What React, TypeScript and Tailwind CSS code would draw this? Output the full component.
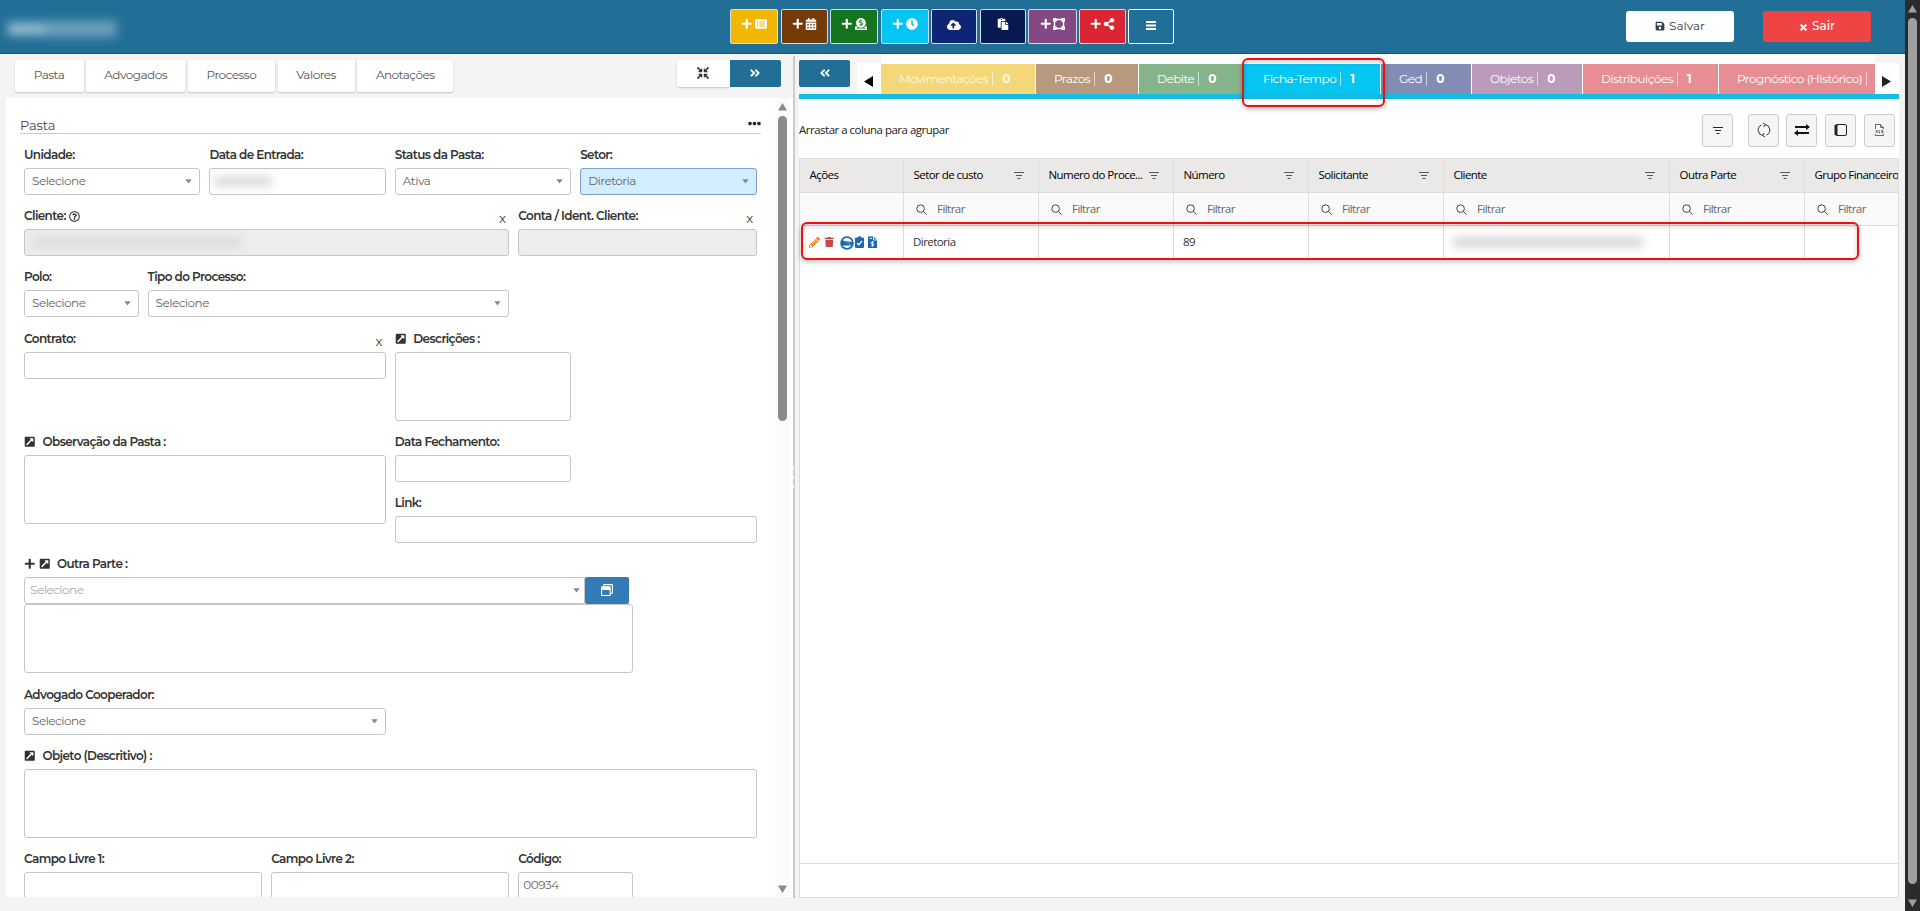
import type { ReactNode } from 'react'
import {
  FaPlus, FaCalendarAlt, FaDonate, FaClock, FaCloudUploadAlt, FaPaste, FaVectorSquare, FaShareAlt,
  FaSave, FaTimes, FaCompressArrowsAlt, FaAngleDoubleRight, FaAngleDoubleLeft, FaEllipsisH,
  FaExternalLinkSquareAlt, FaRegQuestionCircle, FaRegWindowRestore, FaPencilAlt, FaTrash,
} from 'react-icons/fa'
import { FaRectangleList } from 'react-icons/fa6'

const actions = [
  { color: 'bg-[#f2b705]', width: 'w-[48px] mr-[3px]', plus: true, icon: <FaRectangleList /> },
  { color: 'bg-[#743a08]', width: 'w-[47px] mr-[2px]', plus: true, icon: <FaCalendarAlt /> },
  { color: 'bg-[#15751f]', width: 'w-[48px] mr-[3px]', plus: true, icon: <FaDonate /> },
  { color: 'bg-[#05c5f3]', width: 'w-[48px] mr-[2px]', plus: true, icon: <FaClock /> },
  { color: 'bg-[#102475]', width: 'w-[46px] mr-[3px]', plus: false, icon: <FaCloudUploadAlt className="text-[14px]" /> },
  { color: 'bg-[#081850]', width: 'w-[46px] mr-[2px]', plus: false, icon: <FaPaste /> },
  { color: 'bg-[#824882]', width: 'w-[49px] mr-[2px]', plus: true, icon: <FaVectorSquare /> },
  { color: 'bg-[#db2533]', width: 'w-[47px] mr-[2px]', plus: true, icon: <FaShareAlt /> },
]

const formTabs = [
  { label: 'Pasta', width: 'w-[69px]' },
  { label: 'Advogados', width: 'w-[99px]' },
  { label: 'Processo', width: 'w-[87px]' },
  { label: 'Valores', width: 'w-[77px]' },
  { label: 'Anotações', width: 'w-[96px]' },
]

const recordTabs = [
  { label: 'Movimentações', count: 0, style: 'w-[154px] pl-[18px] bg-[#f3d779] text-white/80' },
  { label: 'Prazos', count: 0, style: 'w-[102px] pl-[18px] bg-[#b79a7d] text-white' },
  { label: 'Debite', count: 0, style: 'w-[104px] pl-[18px] bg-[#86b48a] text-white' },
  { label: 'Ficha-Tempo', count: 1, style: 'w-[136px] pl-[19px] bg-[#05c5f3] text-white' },
  { label: 'Ged', count: 0, style: 'w-[90px] pl-[18px] bg-[#828db5] text-white' },
  { label: 'Objetos', count: 0, style: 'w-[110px] pl-[18px] bg-[#ba9cba] text-white' },
  { label: 'Distribuições', count: 1, style: 'w-[135px] pl-[18px] bg-[#e68e93] text-white' },
  { label: 'Prognóstico (Histórico)', count: 0, style: 'w-[170px] pl-[18px] bg-[#e68e93] text-white' },
]

const columns = [
  { title: 'Ações', width: 'w-[104px]', value: 'actions' },
  { title: 'Setor de custo', width: 'w-[135px]', value: 'Diretoria' },
  { title: 'Numero do Proce...', width: 'w-[135px]', value: '' },
  { title: 'Número', width: 'w-[135px]', value: '89' },
  { title: 'Solicitante', width: 'w-[135px]', value: '' },
  { title: 'Cliente', width: 'w-[226px]', value: 'hidden' },
  { title: 'Outra Parte', width: 'w-[135px]', value: '' },
  { title: 'Grupo Financeiro', width: 'w-[94px]', value: '' },
]

function Caret() {
  return (
    <svg width="7" height="5" viewBox="0 0 7 5" className="shrink-0">
      <path d="M0.3 0.3h6.4L3.5 4.4z" fill="#888" />
    </svg>
  )
}

function FilterIcon({ color = '#555' }: { color?: string }) {
  return (
    <svg width="10" height="9" viewBox="0 0 10 9" fill="none" stroke={color} className="shrink-0">
      <path d="M0 1.5h10M2 4.5h6M3.5 7.5h3" />
    </svg>
  )
}

function SearchIcon() {
  return (
    <svg width="11" height="11" viewBox="0 0 11 11" fill="none" stroke="#444" className="shrink-0">
      <circle cx="4.6" cy="4.6" r="3.8" />
      <path d="M7.4 7.4l3.2 3.2" />
    </svg>
  )
}

interface FieldProps {
  label: string
  span: string
  prefix?: ReactNode
  help?: boolean
  clear?: boolean
  children: ReactNode
}

function Field({ label, span, prefix, help, clear, children }: FieldProps) {
  return (
    <div className={span}>
      <div className="flex h-7 items-center whitespace-nowrap pt-[2px] text-[12px] font-semibold tracking-[-0.6px] text-[#333]">
        {prefix}
        {label}
        {help && <FaRegQuestionCircle className="ml-[3px] text-[11px]" />}
        {clear && <span className="ml-auto mr-1 mt-[5px] text-[13px] font-normal">x</span>}
      </div>
      {children}
    </div>
  )
}

const box = 'rounded-[3px] border border-[#c6c6c6]'

function Input({ value, className = 'bg-white' }: { value?: string; className?: string }) {
  return <div className={`flex h-[27px] items-center px-1 pb-[1px] text-[12px] tracking-[-0.5px] text-[#666] ${box} ${className}`}>{value}</div>
}

function Select({ value, active }: { value: string; active?: boolean }) {
  return (
    <div
      className={`flex h-[27px] items-center justify-between rounded-[3px] border px-[7px] pb-[1px] text-[12px] tracking-[-0.5px] text-[#666] ${
        active ? 'border-[#7f9fce] bg-[#d1eeff]' : 'border-[#c6c6c6] bg-white'
      }`}
    >
      {value}
      <Caret />
    </div>
  )
}

function TextArea() {
  return <div className={`h-[69px] bg-white ${box}`} />
}

const expand = <FaExternalLinkSquareAlt className="mr-[7px] text-[11.5px]" />

function Header() {
  return (
    <header className="flex h-[54px] shrink-0 items-start border-b border-[#174e8d] bg-[#216f97]">
      <div className="w-[730px] pl-1 pt-[18px]">
        <div className="flex h-[21px] w-[116px] items-center bg-white/5 px-1 blur-[5px]">
          <div className="h-3 w-9 bg-white/50" />
          <div className="h-4 w-[72px] bg-white/30" />
        </div>
      </div>
      <div className="flex pt-[9px] text-[12px] text-white">
        {actions.map((a) => (
          <button key={a.color} className={`flex h-[35px] justify-center gap-[2px] rounded-[2px] border border-[#cfdde6] pt-[8px] ${a.width} ${a.color}`}>
            {a.plus && <FaPlus className="text-[11.5px]" />}
            {a.icon}
          </button>
        ))}
        <button className="flex h-[35px] w-[46px] items-center justify-center rounded-[2px] border border-white">
          <svg width="10" height="9" viewBox="0 0 10 9" className="mt-[-2px]">
            <path d="M0 1h10M0 4.500h10M0 8h10" stroke="white" strokeWidth="1.800" />
          </svg>
        </button>
      </div>
      <div className="ml-auto flex gap-[29px] pr-[34px] pt-[11px] text-[12px]">
        <button className="flex h-[31px] w-[108px] items-center justify-center gap-1 rounded-[3px] bg-white pb-[1px] text-[#33404d]">
          <FaSave className="text-[10px]" />
          Salvar
        </button>
        <button className="flex h-[31px] w-[108px] items-center justify-center gap-1 rounded-[3px] bg-[#ef4444] pb-[1px] font-medium text-white">
          <FaTimes className="mt-[2px] text-[9px]" stroke="white" strokeWidth={50} />
          Sair
        </button>
      </div>
    </header>
  )
}

function FolderForm() {
  return (
    <section className="w-[792.5px] shrink-0">
      <div className="flex h-[44px] items-start pl-[14.5px] pt-[6px]">
        <div className="flex gap-[2.7px]">
          {formTabs.map((tab) => (
            <div key={tab.label} className={`flex h-8 items-center justify-center rounded-[2px] bg-white pb-[2px] text-[12px] tracking-[-0.5px] text-[#555] shadow-[0_1px_2px_rgba(0,0,0,0.2)] ${tab.width}`}>
              {tab.label}
            </div>
          ))}
        </div>
        <div className="ml-auto mr-3 flex text-[12px]">
          <div className="flex h-[27px] w-[53px] items-center justify-center rounded-l-[2px] bg-white pb-[2px] text-[#333] shadow-[0_1px_2px_rgba(0,0,0,0.2)]">
            <FaCompressArrowsAlt />
          </div>
          <div className="flex h-[27px] w-[51px] items-center justify-center rounded-r-[2px] bg-[#216f97] pb-[1px] text-white">
            <FaAngleDoubleRight />
          </div>
        </div>
      </div>

      <div className="ml-[6px] flex h-[799px] overflow-hidden bg-white">
        <div className="w-[769px] pl-[14px] pt-[16px]">
          <div className="flex h-[20px] w-[741px] items-center justify-between border-b border-[#ccc] text-[13px] tracking-[-0.1px] text-[#444]">
            <span className="pt-[5px]">Pasta</span>
            <FaEllipsisH className="text-[#222]" />
          </div>
          <div className="ml-[4px] mt-[6px] grid w-[732.5px] grid-cols-12 gap-x-[9px] gap-y-[6px]">
            <Field label="Unidade:" span="col-span-3"><Select value="Selecione" /></Field>
            <Field label="Data de Entrada:" span="col-span-3">
              <div className={`h-[27px] pt-[7px] ${box}`}>
                <div className="ml-1 h-[11px] w-[58px] bg-[#ddd] blur-[4px]" />
              </div>
            </Field>
            <Field label="Status da Pasta:" span="col-span-3"><Select value="Ativa" /></Field>
            <Field label="Setor:" span="col-span-3"><Select value="Diretoria" active /></Field>

            <Field label="Cliente:" span="col-span-8" help clear>
              <div className={`h-[27px] overflow-hidden bg-[#ededed] pt-[8px] ${box}`}>
                <div className="ml-2 h-[9px] w-[208px] bg-[#d9d9d9] blur-[5px]" />
              </div>
            </Field>
            <Field label="Conta / Ident. Cliente:" span="col-span-4" clear><Input className="bg-[#ededed]" /></Field>

            <Field label="Polo:" span="col-span-2"><Select value="Selecione" /></Field>
            <Field label="Tipo do Processo:" span="col-span-6"><Select value="Selecione" /></Field>

            <Field label="Contrato:" span="col-span-6 col-start-1 mt-[1px]" clear><Input /></Field>
            <Field label="Descrições :" span="col-span-3 mt-[1px]" prefix={expand}><TextArea /></Field>

            <Field label="Observação da Pasta :" span="col-span-6 col-start-1" prefix={expand}><TextArea /></Field>
            <div className="col-span-6 grid grid-cols-2 gap-x-[9px] gap-y-[6px]">
              <Field label="Data Fechamento:" span="col-span-1"><Input /></Field>
              <Field label="Link:" span="col-span-2"><Input /></Field>
            </div>

            <Field
              label="Outra Parte :"
              span="col-span-10"
              prefix={<><FaPlus className="mr-[3px] text-[11.5px]" />{expand}</>}
            >
              <div className="flex">
                <div className="flex h-[27px] flex-1 items-center justify-between rounded-l-[3px] border border-[#c6c6c6] pb-[1px] pl-[5px] pr-[4px] text-[12px] tracking-[-0.5px] text-[#aaa]">
                  Selecione
                  <Caret />
                </div>
                <button className="mr-[4px] flex h-[27px] w-[44px] items-center justify-center rounded-[2px] bg-[#337ab7] pb-[1px] text-[12px] text-white">
                  <FaRegWindowRestore />
                </button>
              </div>
              <TextArea />
            </Field>

            <Field label="Advogado Cooperador:" span="col-span-6 col-start-1 mt-[1px]"><Select value="Selecione" /></Field>
            <Field label="Objeto (Descritivo) :" span="col-span-12" prefix={expand}><TextArea /></Field>
            <Field label="Campo Livre 1:" span="col-span-4"><Input /></Field>
            <Field label="Campo Livre 2:" span="col-span-4"><Input /></Field>
            <Field label="Código:" span="col-span-2"><Input value="00934" /></Field>
          </div>
        </div>
        <div className="flex w-[15px] flex-col items-center bg-[#fbfbfb] pt-[5px]">
          <svg width="9" height="8" viewBox="0 0 9 8"><path d="M4.5 0L9 7.5H0z" fill="#8a8a8a" /></svg>
          <div className="mt-[5px] h-[305px] w-[9px] rounded-full bg-[#8a8a8a]" />
          <svg width="9" height="8" viewBox="0 0 9 8" className="mb-[4px] mt-auto"><path d="M4.5 8L9 0.5H0z" fill="#8a8a8a" /></svg>
        </div>
      </div>
    </section>
  )
}

function RowActions() {
  return (
    <div className="flex items-center text-[11px]">
      <FaPencilAlt className="text-[#ea8a2d]" />
      <FaTrash className="ml-[4px] text-[10.5px] text-[#c24a4a]" />
      <svg width="14" height="14" viewBox="0 0 14 14" className="ml-[5px] mt-[1px]">
        <circle cx="7" cy="7" r="5.9" fill="none" stroke="#1b67b0" strokeWidth="1.8" />
        <path d="M2 4.500l10 1.500v3.500H2z" fill="#1b67b0" />
        <path d="M2.500 3.500L11 9.500M8 6.200h2" stroke="#8fb6dc" strokeWidth="0.600" />
      </svg>
      <svg width="9" height="12" viewBox="0 0 9 12" className="ml-[1px]">
        <path d="M1 1.5h2a1.5 1.5 0 0 1 3 0h2a1 1 0 0 1 1 1V11a1 1 0 0 1-1 1H1a1 1 0 0 1-1-1V2.500a1 1 0 0 1 1-1z" fill="#1b67b0" />
        <path d="M2 7l1.800 1.800L7 5" fill="none" stroke="white" strokeWidth="1.300" />
      </svg>
      <svg width="9" height="12" viewBox="0 0 9 12" className="ml-[4px]">
        <path d="M0 0.500h5.500L9 4v8H0z" fill="#1b67b0" />
        <path d="M5.500 0.500V4H9M1.500 2.500H4M5.800 6H4a.9.9 0 0 0 0 1.800h1a.9.9 0 0 1 0 1.800H3.200M4.500 5v5.600" fill="none" stroke="white" strokeWidth="0.900" />
      </svg>
    </div>
  )
}

function ToolButton({ className, children }: { className: string; children: ReactNode }) {
  return (
    <button className={`flex h-[33px] w-[31px] items-center justify-center rounded-[3px] border border-[#ccc] bg-[#f5f5f5] ${className}`}>
      {children}
    </button>
  )
}

function Records() {
  return (
    <section className="ml-[4.500px] flex h-[844px] w-[1100px] flex-col bg-white">
      <div className="flex h-[40px] shrink-0 bg-[#f4f4f4]">
        <button className="mt-[6px] flex h-[27px] w-[51px] items-center justify-center rounded-[2px] bg-[#216f97] pb-[1px] text-[12px] text-white">
          <FaAngleDoubleLeft />
        </button>
        <div className="ml-[7px] mt-[9px] flex w-6 items-center justify-center bg-white pr-[2px] pt-[5px]">
          <svg width="9" height="11" viewBox="0 0 9 11"><path d="M0 5.500L9 0v11z" fill="#000" /></svg>
        </div>
        <div className="flex w-[994px] gap-[1px] overflow-hidden bg-white pt-[10px]">
          {recordTabs.map((tab) => (
            <div key={tab.label} className={`flex h-[30px] shrink-0 items-center whitespace-nowrap text-[12px] tracking-[-0.5px] ${tab.style}`}>
              {tab.label}
              <span className="ml-[4px] flex h-[14px] items-center border-l border-white/60 pl-[9px] font-bold">{tab.count}</span>
            </div>
          ))}
        </div>
        <div className="mt-[9px] flex flex-1 items-center justify-center bg-white pr-[2px] pt-[5px]">
          <svg width="9" height="11" viewBox="0 0 9 11"><path d="M9 5.500L0 0v11z" fill="#222" /></svg>
        </div>
      </div>
      <div className="h-[5px] shrink-0 bg-[#16bde3]" />

      <div className="flex h-[59px] shrink-0 items-center font-['Open_Sans','Noto_Sans',sans-serif] text-[11.5px] tracking-[-0.5px] text-[#222]">
        <span className="pt-[3px]">Arrastar a coluna para agrupar</span>
        <div className="ml-auto flex pr-[4px] pt-[3px]">
          <ToolButton className="mr-[15px]"><FilterIcon color="#222" /></ToolButton>
          <ToolButton className="mr-[7px]">
            <svg width="14" height="16" viewBox="0 0 14 16" fill="none" stroke="#333">
              <path d="M8 2.500A5.500 5.500 0 0 1 9.500 13M6 13.500A5.500 5.500 0 0 1 4.500 3" />
              <path d="M6 1L8.300 2.600 6.700 5M8 15l-2.300-1.600L7.300 11" />
            </svg>
          </ToolButton>
          <ToolButton className="mr-[8px]">
            <svg width="16" height="12" viewBox="0 0 16 12" fill="none" stroke="#111" strokeWidth="2">
              <path d="M1 3h12M3 9h12" />
              <path d="M12 0l4 3-4 3zM4 6L0 9l4 3z" fill="#111" stroke="none" />
            </svg>
          </ToolButton>
          <ToolButton className="mr-[8px]">
            <svg width="13" height="12" viewBox="0 0 13 12" fill="none" stroke="#222">
              <rect x="1.500" y="0.500" width="11" height="11" rx="1.500" />
              <path d="M2 1v10" strokeWidth="3" />
            </svg>
          </ToolButton>
          <ToolButton className="">
            <svg width="9" height="12" viewBox="0 0 9 12" fill="none" stroke="#444" strokeWidth="0.800">
              <path d="M0.500 5V0.500h5l3 3V5M5.500 0.500v3h3M0.500 10v1.500h8V10" />
              <path d="M1 6.200l1.500 2.600M2.500 6.200L1 8.800M4.200 6v3h1M8 6.200H6.700v1.200H8v1.400H6.500" />
            </svg>
          </ToolButton>
        </div>
      </div>

      <div className="flex flex-1 flex-col overflow-hidden border border-[#ddd] font-['Open_Sans','Noto_Sans',sans-serif] text-[11.5px] tracking-[-0.55px]">
        <div className="flex h-[33px] shrink-0 bg-[#ebe9e8] text-black">
          {columns.map((c, i) => (
            <div key={c.title} className={`flex shrink-0 items-center justify-between whitespace-nowrap border-r border-[#ddd] pb-[1px] pl-[9.500px] pr-[14px] font-medium ${c.width}`}>
              {c.title}
              {i > 0 && i < 7 && <FilterIcon />}
            </div>
          ))}
        </div>
        <div className="flex h-[34px] shrink-0 border-y border-[#ddd] bg-[#fafafa] text-[#666]">
          {columns.map((c, i) => (
            <div key={c.title} className={`flex shrink-0 items-center gap-[10px] border-r border-[#ddd] pl-[12px] ${c.width}`}>
              {i > 0 && <><SearchIcon />Filtrar</>}
            </div>
          ))}
        </div>
        <div className="flex h-[34px] shrink-0 text-[#333]">
          {columns.map((c) => (
            <div key={c.title} className={`flex shrink-0 items-center border-r border-[#ddd] pb-[2px] pl-[9px] ${c.width}`}>
              {c.value === 'actions' && <RowActions />}
              {c.value === 'hidden' && <div className="h-[10px] w-[190px] bg-[#d5d5d5] blur-[5px]" />}
              {c.value !== 'actions' && c.value !== 'hidden' && c.value}
            </div>
          ))}
        </div>
        <div className="mt-auto h-[34px] border-t border-[#ddd]" />
      </div>
    </section>
  )
}

export default function App() {
  return (
    <div className="relative flex h-[911px] w-[1920px] overflow-hidden bg-[#f4f4f4] font-['Montserrat','Inter',sans-serif]">
      <div className="flex w-[1905px] flex-col">
        <Header />
        <main className="flex">
          <FolderForm />
          <div className="mt-[2px] flex h-[842px] w-[2px] flex-col items-center justify-center gap-[6px] bg-[#ccc]">
            <div className="h-[3px] w-[1px] bg-white" />
            <div className="h-[3px] w-[1px] bg-white" />
            <div className="h-[3px] w-[1px] bg-white" />
          </div>
          <Records />
        </main>
      </div>
      <div className="flex w-[15px] flex-col items-center bg-[#2b2b2b] pt-[5px]">
        <svg width="9" height="8" viewBox="0 0 9 8"><path d="M4.500 0L9 7.500H0z" fill="#9f9f9f" /></svg>
        <div className="mt-[5px] h-[866px] w-[9px] rounded-full bg-[#9f9f9f]" />
        <svg width="9" height="8" viewBox="0 0 9 8" className="mb-[4px] mt-auto"><path d="M4.500 8L9 0.500H0z" fill="#9f9f9f" /></svg>
      </div>

      {/* highlight frames over the active tab and its row */}
      <div className="absolute left-[1242px] top-[58px] h-[49px] w-[143px] rounded-[6px] border-2 border-[#e81313] shadow-[0_2px_5px_rgba(0,0,0,0.25),inset_0_2px_5px_rgba(0,0,0,0.2)]" />
      <div className="absolute left-[801px] top-[222px] h-[38px] w-[1058px] rounded-[6px] border-2 border-[#e81313] shadow-[0_2px_5px_rgba(0,0,0,0.25),inset_0_2px_5px_rgba(0,0,0,0.2)]" />
    </div>
  )
}
